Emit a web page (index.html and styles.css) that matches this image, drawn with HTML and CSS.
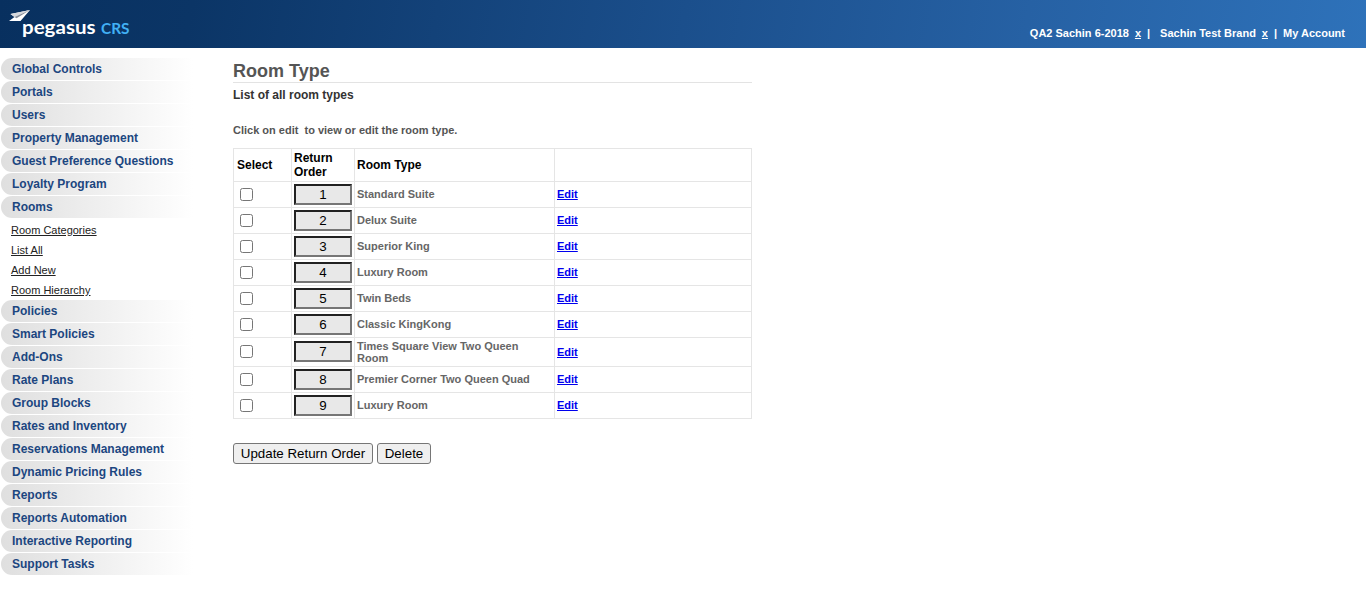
FILE: index.html
```html
<!DOCTYPE html>
<html lang="en">
<head>
<meta charset="utf-8">
<title>Room Type</title>
<link rel="stylesheet" href="styles.css">
</head>
<body>
<header class="header">
  <svg class="logo" width="140" height="48" viewBox="0 0 140 48">
    <path d="M10.5 14 L30 10 L20.5 21 L9 21 L14.5 17 Z" fill="#fff"/>
    <path d="M10.5 14 L30 10 L14.5 17 Z" fill="#d5d7dc"/>
    <path d="M14.5 17 L30 10 L16.5 18.3 Z" fill="#858c99"/>
    <text class="logo-name" x="22" y="34" textLength="73.5" lengthAdjust="spacingAndGlyphs">pegasus</text>
    <text class="logo-crs" x="101" y="34" textLength="28.5" lengthAdjust="spacingAndGlyphs">CRS</text>
  </svg>
  <div class="account"><span>QA2 Sachin 6-2018</span><a class="x1">x</a><span class="bar1">|</span><span class="brand">Sachin Test Brand</span><a class="x1">x</a><span class="bar1">|</span><span class="my">My Account</span></div>
</header>
<div class="page">
  <nav class="nav">
    <a class="item">Global Controls</a>
    <a class="item">Portals</a>
    <a class="item">Users</a>
    <a class="item">Property Management</a>
    <a class="item">Guest Preference Questions</a>
    <a class="item">Loyalty Program</a>
    <a class="item">Rooms</a>
    <div class="sub"><a>Room Categories</a><a>List All</a><a>Add New</a><a>Room Hierarchy</a></div>
    <a class="item">Policies</a>
    <a class="item">Smart Policies</a>
    <a class="item">Add-Ons</a>
    <a class="item">Rate Plans</a>
    <a class="item">Group Blocks</a>
    <a class="item">Rates and Inventory</a>
    <a class="item">Reservations Management</a>
    <a class="item">Dynamic Pricing Rules</a>
    <a class="item">Reports</a>
    <a class="item">Reports Automation</a>
    <a class="item">Interactive Reporting</a>
    <a class="item">Support Tasks</a>
  </nav>
  <main class="main">
    <h1 class="title">Room Type</h1>
    <div class="subtitle">List of all room types</div>
    <div class="hint">Click on edit&nbsp; to view or edit the room type.</div>
    <div class="table">
      <div class="row head"><div>Select</div><div>Return<br>Order</div><div>Room Type</div><div></div></div>
      <div class="row"><div><input type="checkbox"></div><div><input class="order" value="1"></div><div>Standard Suite</div><div><a>Edit</a></div></div>
      <div class="row"><div><input type="checkbox"></div><div><input class="order" value="2"></div><div>Delux Suite</div><div><a>Edit</a></div></div>
      <div class="row"><div><input type="checkbox"></div><div><input class="order" value="3"></div><div>Superior King</div><div><a>Edit</a></div></div>
      <div class="row"><div><input type="checkbox"></div><div><input class="order" value="4"></div><div>Luxury Room</div><div><a>Edit</a></div></div>
      <div class="row"><div><input type="checkbox"></div><div><input class="order" value="5"></div><div>Twin Beds</div><div><a>Edit</a></div></div>
      <div class="row"><div><input type="checkbox"></div><div><input class="order" value="6"></div><div>Classic KingKong</div><div><a>Edit</a></div></div>
      <div class="row tall"><div><input type="checkbox"></div><div><input class="order" value="7"></div><div>Times Square View Two Queen Room</div><div><a>Edit</a></div></div>
      <div class="row"><div><input type="checkbox"></div><div><input class="order" value="8"></div><div>Premier Corner Two Queen Quad</div><div><a>Edit</a></div></div>
      <div class="row"><div><input type="checkbox"></div><div><input class="order" value="9"></div><div>Luxury Room</div><div><a>Edit</a></div></div>
    </div>
    <div class="actions"><button class="update">Update Return Order</button><button class="delete">Delete</button></div>
  </main>
</div>
</body>
</html>
```
FILE: styles.css
```css
* { box-sizing: border-box; }
body {
  margin: 0;
  background: #fff;
  font-family: "Liberation Sans", Arial, sans-serif;
  font-weight: bold;
}
.header {
  display: flex;
  justify-content: space-between;
  height: 48px;
  background: linear-gradient(100deg, #08305f 0%, #0b3566 14%, #1b4f8c 50%, #2661a4 75%, #2e72ba 100%);
}
.logo { display: block; }
.logo-name { font: 700 19px Lato, sans-serif; fill: #fff; }
.logo-crs { font: 700 14.5px Lato, sans-serif; fill: #41b0f5; }
.account {
  display: flex;
  padding: 27px 21px 0 0;
  font-size: 11px;
  line-height: 13px;
  color: #fff;
  white-space: nowrap;
}
.x1 { margin-left: 6px; text-decoration: underline; }
.bar1 { margin-left: 6px; }
.brand { margin-left: 10px; }
.my { margin-left: 6px; }
.page { display: flex; }
.nav { width: 233px; padding: 10px 0 0 1px; }
.item {
  display: block;
  width: 192px;
  height: 22px;
  margin-bottom: 1px;
  padding-left: 11px;
  border-radius: 11px 0 0 11px;
  background: linear-gradient(90deg, #dfdfdf, #fff);
  color: #1c4680;
  font-size: 12px;
  line-height: 22px;
  white-space: nowrap;
}
.sub {
  display: flex;
  flex-direction: column;
  height: 81px;
  padding: 1px 0 0 10px;
  font-size: 11px;
  font-weight: normal;
  line-height: 20px;
  color: #222;
}
.sub a { text-decoration: underline; }
.main { width: 519px; padding-top: 13px; }
.title {
  height: 22px;
  margin: 0;
  border-bottom: 1px solid #e3e3e3;
  color: #555;
  font-size: 18px;
  line-height: 20px;
}
.subtitle { height: 40px; padding-top: 5px; color: #333; font-size: 12px; line-height: 14px; }
.hint { height: 25px; padding-top: 1px; color: #555; font-size: 11px; line-height: 13px; }
.table { border: solid #e5e5e5; border-width: 1px 0 0 1px; }
.row {
  display: grid;
  grid-template-columns: 58px 63px 200px 197px;
  height: 26px;
  color: #666;
  font-size: 11px;
  line-height: 12px;
}
.row > div {
  display: flex;
  align-items: center;
  padding: 0 2px;
  border: solid #e5e5e5;
  border-width: 0 1px 1px 0;
}
.row > div:nth-child(n+3) { padding-bottom: 2px; }
.row > div:nth-child(3) { padding-right: 20px; }
.head { height: 33px; color: #000; font-size: 12px; line-height: 14px; }
.head > div:first-child { padding-left: 3px; }
.row.head > div:nth-child(n+3) { padding-bottom: 0; }
.tall { height: 29px; }
.row.tall > div:nth-child(-n+2) { padding-bottom: 2px; }
.row.tall > div:nth-child(n+3) { padding-bottom: 0; }
.row a { color: #00e; text-decoration: underline; }
.row input[type="checkbox"] { width: 13px; height: 13px; margin: 0 0 0 4px; }
.order {
  width: 58px;
  height: 21px;
  padding: 0;
  border: 2px inset #767676;
  background: #e8e8e8;
  color: #000;
  font: 13.333px "Liberation Sans", Arial, sans-serif;
  text-align: center;
}
.actions { display: flex; gap: 4px; padding-top: 24px; }
.actions button {
  height: 21px;
  padding: 0;
  border: 1px solid #767676;
  border-radius: 3px;
  background: #efefef;
  color: #000;
  font: 13.333px "Liberation Sans", Arial, sans-serif;
}
.update { width: 140px; }
.delete { width: 54px; }
```
